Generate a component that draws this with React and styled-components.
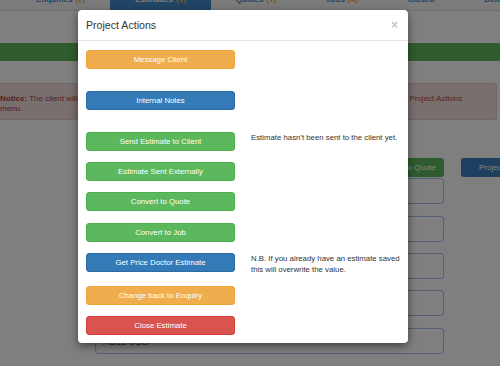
import React from 'react';
import styled, { createGlobalStyle } from 'styled-components';

const GlobalStyle = createGlobalStyle`
  html, body {
    margin: 0;
    padding: 0;
    overflow: hidden;
  }

  body {
    font-family: "Liberation Sans", Arial, Helvetica, sans-serif;
    color: #333;
  }
`

const Page = styled.div`
  position: relative;
  width: 500px;
  height: 366px;
  overflow: hidden;
  background: #fff;
`

const NavBar = styled.div`
  display: flex;
  height: 21px;
  margin-top: -11px;
  padding-left: 11px;
  border-bottom: 1px solid #ddd;
  background: #f7f7f7;
`

const Tab = styled.div`
  display: flex;
  align-items: center;
  padding: 0 25px;
  font-size: 8px;
  font-weight: bold;
  white-space: nowrap;
  color: ${props => props.$active ? '#fff' : '#428bca'};
  background: ${props => props.$active ? '#428bca' : 'transparent'};
`

const Count = styled.span`
  margin-left: 3px;
  color: #f0ad4e;
`

const StatusBar = styled.div`
  height: 18px;
  margin-top: 32px;
  background: #5cb85c;
`

const Notice = styled.div`
  width: 497px;
  box-sizing: border-box;
  margin-top: 22px;
  padding: 10px 0 5px;
  background: #f2dede;
  border: 1px solid #ebccd1;
  border-left: none;
  border-radius: 0 3px 3px 0;
  color: #a94442;
  font-size: 8px;
  line-height: 10px;
  white-space: nowrap;

  b {
    font-weight: bold;
  }
`

const FormArea = styled.div`
  display: flex;
  gap: 17px;
  margin-top: 38px;
  padding-left: 95px;
`

const FormColumn = styled.div`
  width: 349px;
  flex-shrink: 0;
  display: flex;
  flex-direction: column;
`

const Toolbar = styled.div`
  display: flex;
  justify-content: flex-end;
`

const PageButton = styled.div`
  height: 19px;
  box-sizing: border-box;
  display: flex;
  align-items: center;
  padding: 0 ${props => props.$pad}px;
  font-size: 8px;
  color: #fff;
  white-space: nowrap;
  border-radius: 3px;
  background: ${props => props.$bg};
  flex-shrink: 0;
`

const Input = styled.div`
  height: 26px;
  box-sizing: border-box;
  margin-top: ${props => props.$space}px;
  padding-left: 7px;
  display: flex;
  align-items: center;
  border: 1.5px solid #a9c0e6;
  border-radius: 3px;
  font-size: 9.6px;
  color: #555;
`

const Overlay = styled.div`
  position: absolute;
  inset: 0;
  background: rgba(0, 0, 0, 0.5);
  padding: 10px 0 0 78px;
`

const Modal = styled.div`
  width: 330px;
  background: #fff;
  border-radius: 4px;
  box-shadow: 0 3px 9px rgba(0, 0, 0, 0.5);
`

const ModalHeader = styled.div`
  display: flex;
  align-items: center;
  justify-content: space-between;
  height: 31px;
  box-sizing: border-box;
  padding: 0 8px;
  border-bottom: 1px solid #e5e5e5;
`

const Title = styled.h4`
  margin: 0;
  font-size: 10.6px;
  font-weight: normal;
  color: #333;
`

const Close = styled.span`
  font-size: 12px;
  font-weight: bold;
  color: #c4c4c4;
  line-height: 1;
  margin-right: 2px;
`

const ModalBody = styled.div`
  padding: 9px 8px 8px;
`

const ActionRow = styled.div`
  display: grid;
  grid-template-columns: 149px 149px;
  grid-template-rows: 19px;
  column-gap: 16px;
  align-items: start;
  margin-top: ${props => props.$space}px;

  &:first-child {
    margin-top: 0;
  }
`

const colours = {
  warning: ['#f0ad4e', '#eea236'],
  primary: ['#337ab7', '#2e6da4'],
  success: ['#5cb85c', '#4cae4c'],
  danger: ['#d9534f', '#d43f3a'],
}

const ActionButton = styled.div`
  height: 19px;
  box-sizing: border-box;
  display: flex;
  align-items: center;
  justify-content: center;
  font-size: 7.8px;
  color: #fff;
  border-radius: 3px;
  background: ${props => colours[props.$kind][0]};
  border: 1px solid ${props => colours[props.$kind][1]};
`

const Note = styled.div`
  font-size: 7.8px;
  line-height: 11px;
  color: #333;
  white-space: nowrap;
`

const actions = [
  { label: 'Message Client', kind: 'warning', space: 0 },
  { label: 'Internal Notes', kind: 'primary', space: 22 },
  { label: 'Send Estimate to Client', kind: 'success', space: 22, note: ["Estimate hasn't been sent to the client yet."] },
  { label: 'Estimate Sent Externally', kind: 'success', space: 11 },
  { label: 'Convert to Quote', kind: 'success', space: 11 },
  { label: 'Convert to Job', kind: 'success', space: 12 },
  { label: 'Get Price Doctor Estimate', kind: 'primary', space: 11, note: ['N.B. If you already have an estimate saved', 'this will overwrite the value.'] },
  { label: 'Change back to Enquiry', kind: 'warning', space: 14 },
  { label: 'Close Estimate', kind: 'danger', space: 11 },
]

const App = () => {
  return (
    <Page>
      <GlobalStyle />
      <NavBar>
        <Tab>Enquiries<Count>(2)</Count></Tab>
        <Tab $active>Estimates<Count>(1)</Count></Tab>
        <Tab>Quotes<Count>(1)</Count></Tab>
        <Tab>Jobs<Count>(4)</Count></Tab>
        <Tab>Closed</Tab>
        <Tab>Deleted</Tab>
      </NavBar>

      <StatusBar />

      <Notice>
        <b>Notice:</b> The client will not be able to see this estimate until it has been sent to them, you can easily do this from the Project Actions
        <br />
        menu.
      </Notice>

      <FormArea>
        <FormColumn>
          <Toolbar>
            <PageButton $bg="#5cb85c" $pad={8}>Convert to Quote</PageButton>
          </Toolbar>
          <Input $space={1} />
          <Input $space={12} />
          <Input $space={11} />
          <Input $space={11} />
          <Input $space={12}>AB12 3GD</Input>
        </FormColumn>
        <PageButton $bg="#3a7fc0" $pad={18}>Project Actions</PageButton>
      </FormArea>

      <Overlay>
        <Modal>
          <ModalHeader>
            <Title>Project Actions</Title>
            <Close>×</Close>
          </ModalHeader>
          <ModalBody>
            {actions.map(action => (
              <ActionRow key={action.label} $space={action.space}>
                <ActionButton $kind={action.kind}>{action.label}</ActionButton>
                {action.note && (
                  <Note>
                    {action.note.map(line => <div key={line}>{line}</div>)}
                  </Note>
                )}
              </ActionRow>
            ))}
          </ModalBody>
        </Modal>
      </Overlay>
    </Page>
  )
}

export default App;
